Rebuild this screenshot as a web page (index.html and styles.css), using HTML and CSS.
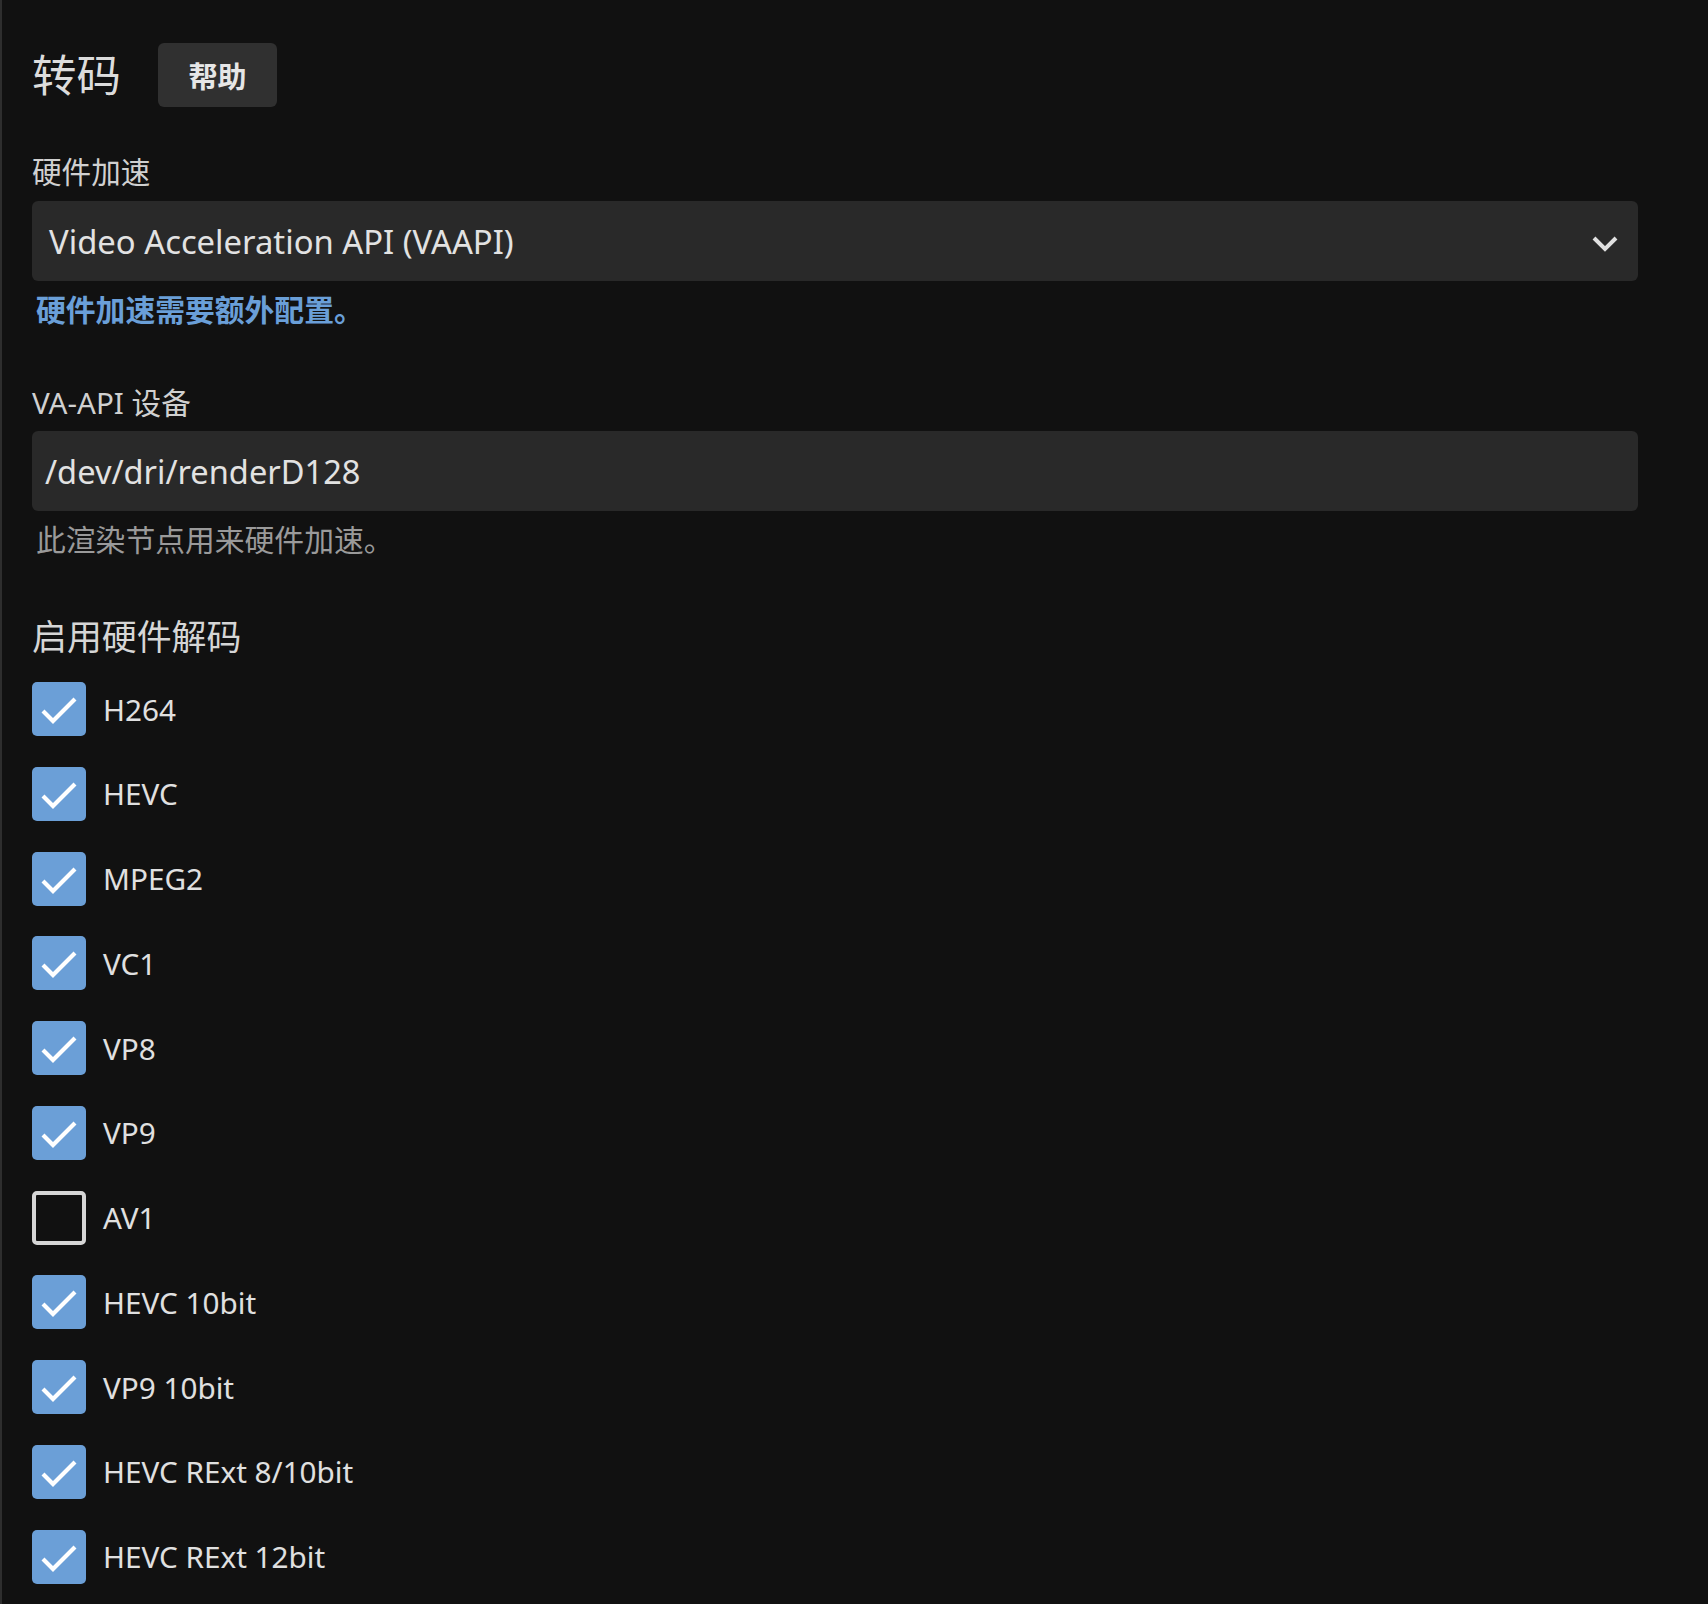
FILE: index.html
```html
<!DOCTYPE html>
<html lang="zh-CN">
<head>
<meta charset="utf-8">
<title>转码</title>
<link rel="stylesheet" href="styles.css">
</head>
<body>
<div class="page">
  <div class="header">
    <h2 class="title">转码</h2>
    <button class="help-btn">帮助</button>
  </div>

  <label class="field-label">硬件加速</label>
  <div class="select">
    <span class="select-text">Video Acceleration API (VAAPI)</span>
    <svg class="chevron" width="28" height="18" viewBox="0 0 28 18"><path d="M3 3 L14 14 L25 3" fill="none" stroke="#e0e0e0" stroke-width="4"/></svg>
  </div>
  <div class="link-text">硬件加速需要额外配置。</div>

  <label class="field-label second">VA-API 设备</label>
  <div class="input">/dev/dri/renderD128</div>
  <div class="hint">此渲染节点用来硬件加速。</div>

  <h3 class="section-title">启用硬件解码</h3>
  <div class="checks">
    <div class="check-row"><span class="box on"><svg viewBox="0 0 54 54"><path d="M11 29 L21 39 L43 17" fill="none" stroke="#fff" stroke-width="4.2"/></svg></span><span class="check-label">H264</span></div>
    <div class="check-row"><span class="box on"><svg viewBox="0 0 54 54"><path d="M11 29 L21 39 L43 17" fill="none" stroke="#fff" stroke-width="4.2"/></svg></span><span class="check-label">HEVC</span></div>
    <div class="check-row"><span class="box on"><svg viewBox="0 0 54 54"><path d="M11 29 L21 39 L43 17" fill="none" stroke="#fff" stroke-width="4.2"/></svg></span><span class="check-label">MPEG2</span></div>
    <div class="check-row"><span class="box on"><svg viewBox="0 0 54 54"><path d="M11 29 L21 39 L43 17" fill="none" stroke="#fff" stroke-width="4.2"/></svg></span><span class="check-label">VC1</span></div>
    <div class="check-row"><span class="box on"><svg viewBox="0 0 54 54"><path d="M11 29 L21 39 L43 17" fill="none" stroke="#fff" stroke-width="4.2"/></svg></span><span class="check-label">VP8</span></div>
    <div class="check-row"><span class="box on"><svg viewBox="0 0 54 54"><path d="M11 29 L21 39 L43 17" fill="none" stroke="#fff" stroke-width="4.2"/></svg></span><span class="check-label">VP9</span></div>
    <div class="check-row"><span class="box off"></span><span class="check-label">AV1</span></div>
    <div class="check-row"><span class="box on"><svg viewBox="0 0 54 54"><path d="M11 29 L21 39 L43 17" fill="none" stroke="#fff" stroke-width="4.2"/></svg></span><span class="check-label">HEVC 10bit</span></div>
    <div class="check-row"><span class="box on"><svg viewBox="0 0 54 54"><path d="M11 29 L21 39 L43 17" fill="none" stroke="#fff" stroke-width="4.2"/></svg></span><span class="check-label">VP9 10bit</span></div>
    <div class="check-row"><span class="box on"><svg viewBox="0 0 54 54"><path d="M11 29 L21 39 L43 17" fill="none" stroke="#fff" stroke-width="4.2"/></svg></span><span class="check-label">HEVC RExt 8/10bit</span></div>
    <div class="check-row"><span class="box on"><svg viewBox="0 0 54 54"><path d="M11 29 L21 39 L43 17" fill="none" stroke="#fff" stroke-width="4.2"/></svg></span><span class="check-label">HEVC RExt 12bit</span></div>
  </div>
</div>
</body>
</html>
```

FILE: styles.css
```css
* { box-sizing: border-box; }
html, body {
  margin: 0;
  padding: 0;
  background: #111111;
}
body {
  font-family: "Noto Sans", "Noto Sans CJK SC", sans-serif;
  color: #dedede;
  font-size: 29.6px;
  height: 1604px;
  overflow: hidden;
}
.page {
  border-left: 2px solid #2e2e2e;
  min-height: 1604px;
  padding: 43px 70px 0 30px;
}
.header {
  display: flex;
  align-items: center;
  gap: 37px;
  height: 64px;
}
.title {
  margin: 0;
  font-size: 44.5px;
  font-weight: 400;
  line-height: 64px;
  color: #dcdcdc;
}
.help-btn {
  font-family: "Noto Sans CJK SC", "Noto Sans", sans-serif;
  font-size: 29px;
  font-weight: 700;
  color: #e6e6e6;
  background: #303030;
  border: none;
  border-radius: 6px;
  width: 119px;
  height: 64px;
  padding: 0;
}
.field-label {
  display: block;
  margin-top: 45px;
  font-size: 29.6px;
  line-height: 40px;
  height: 40px;
  color: #d0d0d0;
}
.field-label.second {
  margin-top: 53px;
}
.select {
  margin-top: 9px;
  height: 80px;
  background: #292929;
  border-radius: 6px;
  display: flex;
  align-items: center;
  justify-content: space-between;
  padding: 0 19px 0 17px;
}
.select-text {
  font-size: 32.8px;
  color: #e2e2e2;
}
.chevron {
  margin-top: 6px;
}
.link-text {
  margin-top: 9px;
  line-height: 40px;
  height: 40px;
  padding-left: 4px;
  font-size: 29.8px;
  font-weight: 700;
  color: #6a9fd8;
}
.input {
  margin-top: 8px;
  height: 80px;
  background: #292929;
  border-radius: 6px;
  display: flex;
  align-items: center;
  padding-left: 13px;
  font-size: 32.6px;
  color: #e2e2e2;
}
.hint {
  margin-top: 9px;
  line-height: 40px;
  height: 40px;
  padding-left: 4px;
  font-size: 29.8px;
  color: #9a9a9a;
}
.section-title {
  margin: 54px 0 0;
  font-size: 34.9px;
  font-weight: 400;
  line-height: 46px;
  height: 46px;
  color: #d6d6d6;
}
.checks {
  margin-top: 22px;
  display: flex;
  flex-direction: column;
  gap: 30.75px;
}
.check-row {
  display: flex;
  align-items: center;
  gap: 17px;
  height: 54px;
}
.box {
  width: 54px;
  height: 54px;
  border-radius: 5px;
  flex: none;
  display: block;
}
.box svg {
  display: block;
  width: 54px;
  height: 54px;
}
.box.on {
  background: #6b9fd7;
}
.box.off {
  border: 4px solid #d6d6d6;
}
.check-label {
  font-size: 29.7px;
  color: #e0e0e0;
}
```
